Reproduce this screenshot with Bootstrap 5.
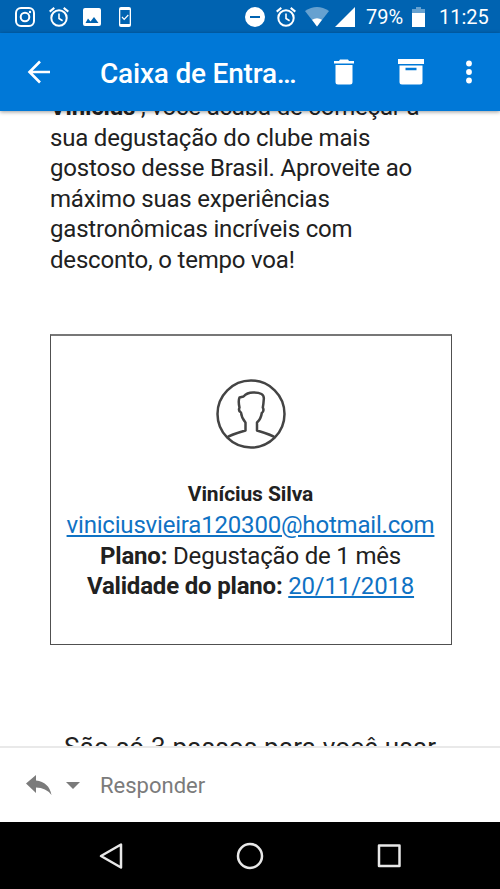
<!DOCTYPE html>
<html lang="pt-BR">
<head>
  <meta charset="UTF-8">
  <title>Caixa de Entrada</title>
  <meta name="viewport" content="width=device-width, initial-scale=1">
  <link rel="stylesheet" href="https://cdn.jsdelivr.net/npm/bootstrap@5.3.0/dist/css/bootstrap.min.css">
  <style>
    body {
      height: 889px;
      font-family: Roboto, "Liberation Sans", sans-serif;
      color: #212121;
      background-color: #fff;
    }
    svg {
      display: block;
      flex-shrink: 0;
    }

    /* Status bar */
    .status-bar {
      height: 33px;
      padding: 1px 11px 0 15px;
      background-color: #0063b1;
      font-size: 20px;
      line-height: 32px;
    }
    .gap-a { margin-left: 14px; }
    .gap-b { margin-left: 11px; }
    .phone-icon { margin-left: 18px; }
    .wifi-icon { margin-left: 9px; }
    .signal-icon { margin-left: 6px; }
    .status-pct { margin-left: 11px; width: 35px; }
    .status-time { margin-left: 14px; width: 50px; }

    /* App bar */
    .app-bar {
      height: 78px;
      padding: 0 28px 0 27px;
      background-color: #0078d7;
      box-shadow: 0 1px 4px rgba(0,0,0,0.4);
      z-index: 2;
    }
    .app-title {
      margin: 3px 0 0 49px;
      width: 207px;
      font-size: 28px;
      font-weight: 500;
      line-height: 36px;
      letter-spacing: -0.2px;
    }
    .archive-icon { margin: 0 42px 0 44px; }

    /* Message */
    .mail-view { min-height: 0; }
    .mail-text {
      margin: -19px 0 0 50px;
      font-size: 24px;
      line-height: 30.6px;
      letter-spacing: -0.19px;
    }
    .plan-box {
      width: 402px;
      height: 311px;
      margin: 58px 0 0 50px;
      padding: 43px 1px 0 0;
      border: 1px solid #505050;
      border-top: 2px solid #777;
      font-size: 24px;
      line-height: 30.6px;
      letter-spacing: -0.19px;
    }
    .plan-name {
      margin: 30px 0 1px;
      font-size: 21px;
      letter-spacing: -0.1px;
    }
    .plan-box a { color: #0f72c4; }
    .steps-title {
      margin: 85px 0 0 64px;
      font-size: 26px;
      line-height: 34px;
      letter-spacing: 0.2px;
    }

    /* Reply bar */
    .reply-bar {
      height: 76px;
      padding-left: 26px;
      border-top: 2px solid #e9e9e9;
      font-size: 22px;
      color: #7b7b7b;
    }
    .reply-label { margin: 1px 0 0 20px; }

    /* Android navigation */
    .nav-keys {
      height: 67px;
      padding: 0 98px;
      background-color: #000;
    }
  </style>
</head>
<body class="d-flex flex-column overflow-hidden">
  <div class="status-bar d-flex align-items-center text-white text-nowrap flex-shrink-0">
    <svg width="20" height="20" viewBox="0 0 20 20" fill="none" stroke="#fff" stroke-width="2"><rect x="1" y="1" width="18" height="18" rx="5"/><circle cx="10" cy="10" r="4.3"/><circle cx="15" cy="5" r="1.2" fill="#fff" stroke="none"/></svg>
    <svg class="gap-a" width="20" height="20" viewBox="0 0 20 20" fill="none" stroke="#fff" stroke-width="2"><circle cx="10" cy="11" r="7.7"/><path d="M10 6.5v5l3.6 2.2" stroke-width="1.6"/><path d="M.7 4.6 5.3.9M19.3 4.6 14.7.9"/></svg>
    <svg class="gap-a" width="18" height="20" viewBox="0 0 18 20"><path fill="#fff" fill-rule="evenodd" d="M2 1h14a2 2 0 0 1 2 2v14a2 2 0 0 1-2 2H2a2 2 0 0 1-2-2V3a2 2 0 0 1 2-2ZM2.5 16h13L11 10l-3.5 4.4L5 11.5Z"/></svg>
    <svg class="phone-icon" width="12" height="20" viewBox="0 0 12 20"><path fill="#fff" fill-rule="evenodd" d="M2 0h8a2 2 0 0 1 2 2v16a2 2 0 0 1-2 2H2a2 2 0 0 1-2-2V2a2 2 0 0 1 2-2ZM1.3 3v14h9.4V3Z"/><path d="m3 10 2.2 2.3L9.3 8" fill="none" stroke="#fff" stroke-width="1.2"/></svg>

    <svg class="ms-auto" width="20" height="20" viewBox="0 0 20 20"><path fill="#fff" fill-rule="evenodd" d="M10 0a10 10 0 1 0 0 20 10 10 0 0 0 0-20ZM5 9h10v2H5Z"/></svg>
    <svg class="gap-b" width="20" height="20" viewBox="0 0 20 20" fill="none" stroke="#fff" stroke-width="2"><circle cx="10" cy="11" r="7.7"/><path d="M10 6.5v5l3.6 2.2" stroke-width="1.6"/><path d="M.7 4.6 5.3.9M19.3 4.6 14.7.9"/></svg>
    <svg class="wifi-icon" width="24" height="20" viewBox="0 0 24 20"><path fill="#fff" opacity=".4" d="M0 4Q12-4 24 4L12 19.5Z"/><path fill="#fff" d="M7 12.8q5-3 10 0L12 19.5Z"/></svg>
    <svg class="signal-icon" width="20" height="20" viewBox="0 0 20 20"><path fill="#fff" d="M0 20 20 0v20Z"/></svg>
    <span class="status-pct">79%</span>
    <svg class="gap-b" width="13" height="20" viewBox="0 0 13 20"><path fill="#fff" opacity=".4" d="M4 0h5v2h4v4H0V2h4Z"/><path fill="#fff" d="M0 6h13v14H0Z"/></svg>
    <span class="status-time">11:25</span>
  </div>

  <header class="app-bar d-flex align-items-center text-white position-relative flex-shrink-0">
    <svg width="24" height="24" viewBox="0 0 24 24" fill="none" stroke="#fff" stroke-width="2.6"><path d="M23 12H3M13 1.5 2.5 12 13 22.5"/></svg>
    <h1 class="app-title mb-0 text-nowrap">Caixa de Entra…</h1>
    <svg class="ms-auto" width="20" height="26" viewBox="0 0 20 26"><path fill="#fff" d="M6 .5h8L15 2h5v2.500H0V2h5ZM1.500 6h17v17a2.500 2.500 0 0 1-2.500 2.500H4A2.500 2.500 0 0 1 1.500 23Z"/></svg>
    <svg class="archive-icon" width="26" height="26" viewBox="0 0 26 26"><path fill="#fff" fill-rule="evenodd" d="M0 0h26v5H0ZM1.500 6.500h23V23a2.500 2.500 0 0 1-2.500 2.500H4A2.500 2.500 0 0 1 1.500 23ZM7.500 8.700v2.600h11V8.700Z"/></svg>
    <svg width="6" height="24" viewBox="0 0 6 24" fill="#fff"><circle cx="3" cy="3.500" r="2.900"/><circle cx="3" cy="12" r="2.900"/><circle cx="3" cy="20.500" r="2.900"/></svg>
  </header>

  <main class="mail-view flex-grow-1 overflow-hidden">
    <p class="mail-text text-nowrap">
      <b>Vinícius</b> , você acaba de começar a<br>
      sua degustação do clube mais<br>
      gostoso desse Brasil. Aproveite ao<br>
      máximo suas experiências<br>
      gastronômicas incríveis com<br>
      desconto, o tempo voa!
    </p>
    <section class="plan-box text-center text-nowrap">
      <svg class="mx-auto" width="70" height="70" viewBox="0 0 70 70" fill="none" stroke="#444" stroke-width="2.5" stroke-linejoin="round"><circle cx="35" cy="35" r="33.5"/><path d="M11 58.500Q14 56 29.500 51.500V43.500Q25.500 39 25 33.500Q22 32 23.500 28.500Q22 22 23.500 18.500L27.500 17.500Q31 13.500 37 13.500Q48.500 13.300 47.800 20Q47.500 25 46.800 28.500Q48.500 32 45.800 34Q45 40 41 43.500V51.500Q56 56 59 58.500"/></svg>
      <div class="plan-name fw-bold">Vinícius Silva</div>
      <a href="#">viniciusvieira120300@hotmail.com</a><br>
      <b>Plano:</b> Degustação de 1 mês<br>
      <b>Validade do plano:</b> <a href="#">20/11/2018</a>
    </section>
    <h2 class="steps-title text-nowrap fw-normal">São só 3 passos para você usar</h2>
  </main>

  <footer class="reply-bar d-flex align-items-center flex-shrink-0 bg-white">
    <svg width="26" height="22" viewBox="0 0 26 22" fill="#7b7b7b"><path d="M0 9.500 10 1v5.500Q23 8 25.500 21 20 13.500 10 13.500V19Z"/></svg>
    <svg class="gap-a" width="14" height="8" viewBox="0 0 14 8" fill="#7b7b7b"><path d="M0 1h14L7 8Z"/></svg>
    <span class="reply-label">Responder</span>
  </footer>

  <nav class="nav-keys d-flex align-items-center justify-content-between flex-shrink-0">
    <svg width="26" height="28" viewBox="0 0 26 28" fill="none" stroke="#e8e8e8" stroke-width="2.5" stroke-linejoin="round"><path d="M23 2.500v23L3 14Z"/></svg>
    <svg width="28" height="28" viewBox="0 0 28 28" fill="none" stroke="#e8e8e8" stroke-width="2.5"><circle cx="14" cy="14" r="12"/></svg>
    <svg width="26" height="28" viewBox="0 0 26 28" fill="none" stroke="#e8e8e8" stroke-width="2.5" stroke-linejoin="round"><path d="M3 3.500h20.500v20.500H3Z"/></svg>
  </nav>

  <script src="https://cdn.jsdelivr.net/npm/bootstrap@5.3.0/dist/js/bootstrap.bundle.min.js"></script>
</body>
</html>
